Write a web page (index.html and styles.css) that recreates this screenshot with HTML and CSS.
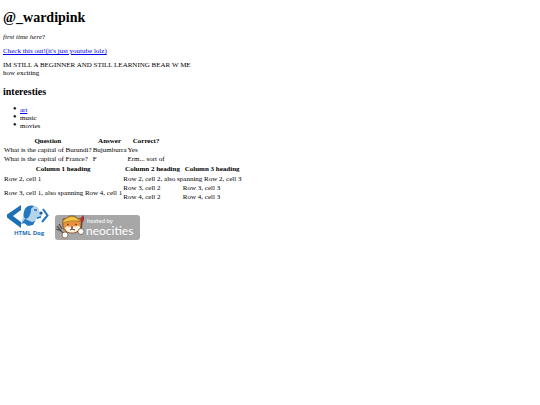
FILE: index.html
```html
<!DOCTYPE html>
<html lang="en">
<head>
<meta charset="utf-8">
<title>@_wardipink</title>
<link rel="stylesheet" href="styles.css">
</head>
<body>
<h1>@_wardipink</h1>
<p><em>first time here</em>?</p>
<p><a href="#video">Check this out!(it's just youtube lolz)</a></p>
<p>IM STILL A BEGINNER AND STILL LEARNING BEAR W ME<br>how exciting</p>
<h2>interesties</h2>
<ul>
<li><a href="#art">art</a></li>
<li>music</li>
<li>movies</li>
</ul>
<table>
<tr><th>Question</th><th>Answer</th><th>Correct?</th></tr>
<tr><td>What is the capital of Burundi?</td><td>Bujumburra</td><td>Yes</td></tr>
<tr><td>What is the capital of France?</td><td>F</td><td>Erm... sort of</td></tr>
</table>
<table class="spans">
<tr><th>Column 1 heading</th><th>Column 2 heading</th><th>Column 3 heading</th></tr>
<tr><td>Row 2, cell 1</td><td colspan="2">Row 2, cell 2, also spanning Row 2, cell 3</td></tr>
<tr><td rowspan="2">Row 3, cell 1, also spanning Row 4, cell 1</td><td>Row 3, cell 2</td><td>Row 3, cell 3</td></tr>
<tr><td>Row 4, cell 2</td><td>Row 4, cell 3</td></tr>
</table>
<div class="badges">
<svg class="dog" viewBox="0 0 50 38" role="img" aria-label="HTML Dog">
<path d="M18 3 V8 L10 14 L18 20 V26 L4 15.500 V12.500Z" fill="#1d70b8"/>
<path d="M18 22 C20 17 20 11 22 7 C23 4 27 3 31 4 C34 4 36 6 36 9 L39 12 C39 15 36 17 33 17 C33 20 31 22 28 23 L22 21Z" fill="#b4d3ec"/>
<path d="M22 7 C24 3 29 3 31 4 L28 7 C28 12 26 16 23 17 C20 16 20 11 22 7Z M18 22 L22 17 L29 20 L32 19 L30 23 L25 24 L21 21Z" fill="#2577bd"/>
<path d="M31 8 L34 8 M34 16 L38 15" fill="none" stroke="#1d70b8" stroke-width="1.500"/>
<circle cx="38" cy="11" r="1.600" fill="#1d5f9e"/>
<path d="M40 7 L44.500 13.500 L39 20" fill="none" stroke="#2577bd" stroke-width="2"/>
<text x="11" y="33">HTML Dog</text>
</svg>
<a class="host" href="#neocities" aria-label="hosted by neocities">
<svg viewBox="0 0 85 26">
<rect y="1" width="85" height="25" rx="3" fill="#a7a7a7"/>
<path d="M2 12 L7 18 M4 10 L7 15 M1 15 L6 17 L10 21" fill="none" stroke="#55504c" stroke-width="1.300"/>
<path d="M8 5 L12 4 C15 1 20 1 23 5 L27 4 L26 10 C27 15 23 19 17 19 C11 19 7 15 8 10Z" fill="#ee913b" stroke="#684428" stroke-width=".8"/>
<path d="M10 14 C12 11 15 14 17 12 C20 14 23 10 25 13 C24 17 20 18.500 17 18.500 C13 18.500 11 17 10 14Z" fill="#fff3df"/>
<path d="M7 9 C10 3 18 0 23 5 L25 8 C20 6 14 7 7 9Z" fill="#f4c445" stroke="#95702b" stroke-width=".7"/>
<path d="M12 11 L14 10 M20 10 L22 11 M16 13 H18 M17 13 V15 M15 16 L17 15 L20 16" fill="none" stroke="#533528" stroke-width="1"/>
<path d="M27 7 L26 18" stroke="#56443f" stroke-width="1.300"/>
<path d="M26 8 C24 5 27 3 28 1 C30 4 29 6 28 8Z" fill="#a83237"/>
<g fill="#fff" stroke="#6b4d34" stroke-width=".7"><circle cx="10" cy="21" r="3"/><circle cx="26" cy="17.500" r="3"/></g>
<g class="small"><text x="32" y="9">hosted by</text></g>
<g class="big"><text x="31" y="21">neocities</text></g>
</svg>
</a>
</div>
</body>
</html>
```

FILE: styles.css
```css
body {
  margin: 11px 3px;
  font: 7px/8px "Liberation Serif", serif;
  color: #000;
  background: #fff;
}
h1 {
  margin: 0 0 8px;
  font-size: 14px;
  line-height: 14px;
}
h2 {
  margin: 9px 0 8px;
  font-size: 10px;
  line-height: 12px;
}
p {
  margin: 0 0 6px;
}
a {
  color: #00e;
}
ul {
  margin: 0 0 6px;
  padding-left: 17px;
  list-style: none;
}
li::before {
  content: "•";
  display: inline-block;
  width: 7px;
  margin-left: -7px;
  font-size: 10px;
  line-height: 1px;
}
table {
  border-spacing: 1px;
}
td,
th {
  padding: 0;
}
.spans th {
  padding-bottom: 1px;
}
.badges {
  display: flex;
  align-items: flex-end;
  gap: 2px;
}
.badges svg {
  display: block;
}
.dog {
  width: 50px;
  height: 38px;
}
.dog text {
  font: bold 6px "Open Sans", sans-serif;
  fill: #1d70b8;
}
.host svg {
  width: 85px;
  height: 26px;
}
.host text {
  fill: #fff;
}
.small {
  font-family: Lato, sans-serif;
  font-size: 6px;
}
.big {
  font-family: Lato, sans-serif;
  font-size: 12px;
}
```
